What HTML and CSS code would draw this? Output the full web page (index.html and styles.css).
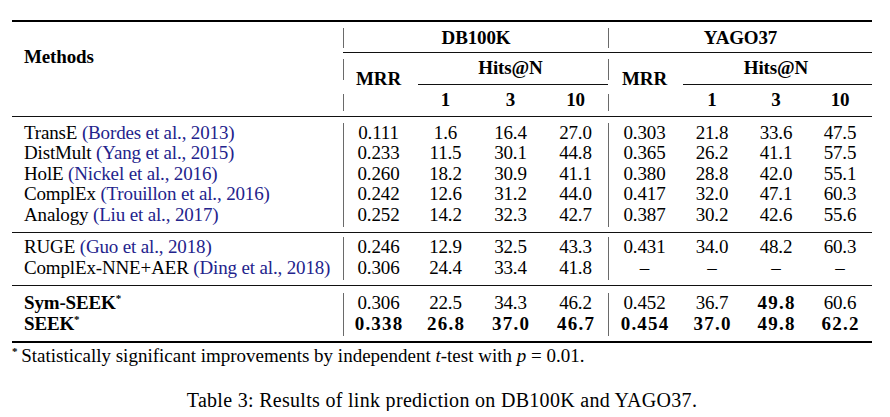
FILE: index.html
```html
<!DOCTYPE html>
<html>
<head>
<meta charset="utf-8">
<title>Table 3</title>
<link rel="stylesheet" href="styles.css">
</head>
<body>
<div class="page">
<table class="results">
<colgroup>
<col class="c-method"><col class="c-bar"><col class="c-mrr1"><col class="c-hit"><col class="c-hit"><col class="c-hit"><col class="c-bar"><col class="c-mrr2"><col class="c-hit2"><col class="c-hit2"><col class="c-hit2">
</colgroup>
<tbody>
<tr class="r-top"><td colspan="11"></td></tr>
<tr class="r-h1">
<th rowspan="5" class="methods">Methods</th>
<td class="v"></td><th colspan="4">DB100K</th><td class="v"></td><th colspan="4">YAGO37</th>
</tr>
<tr class="r-c1"><td colspan="10" class="cl"></td></tr>
<tr class="r-h2">
<td class="v"></td><th rowspan="3" class="mrr">MRR</th><th colspan="3">Hits@N</th>
<td class="v"></td><th rowspan="3" class="mrr">MRR</th><th colspan="3">Hits@N</th>
</tr>
<tr class="r-c2"><td></td><td colspan="3" class="cl cl-db"></td><td></td><td colspan="3" class="cl cl-yg"></td></tr>
<tr class="r-h3">
<td class="v"></td><th>1</th><th>3</th><th>10</th>
<td class="v"></td><th>1</th><th>3</th><th>10</th>
</tr>
<tr class="r-mid"><td colspan="11"></td></tr>

<tr class="row h20"><td class="m">TransE <span class="cite">(Bordes et al., 2013)</span></td><td class="v"></td><td>0.111</td><td>1.6</td><td>16.4</td><td>27.0</td><td class="v"></td><td>0.303</td><td>21.8</td><td>33.6</td><td>47.5</td></tr>
<tr class="row h21"><td class="m">DistMult <span class="cite">(Yang et al., 2015)</span></td><td class="v"></td><td>0.233</td><td>11.5</td><td>30.1</td><td>44.8</td><td class="v"></td><td>0.365</td><td>26.2</td><td>41.1</td><td>57.5</td></tr>
<tr class="row h20"><td class="m">HolE <span class="cite">(Nickel et al., 2016)</span></td><td class="v"></td><td>0.260</td><td>18.2</td><td>30.9</td><td>41.1</td><td class="v"></td><td>0.380</td><td>28.8</td><td>42.0</td><td>55.1</td></tr>
<tr class="row h21"><td class="m">ComplEx <span class="cite">(Trouillon et al., 2016)</span></td><td class="v"></td><td>0.242</td><td>12.6</td><td>31.2</td><td>44.0</td><td class="v"></td><td>0.417</td><td>32.0</td><td>47.1</td><td>60.3</td></tr>
<tr class="row h22"><td class="m">Analogy <span class="cite">(Liu et al., 2017)</span></td><td class="v"></td><td>0.252</td><td>14.2</td><td>32.3</td><td>42.7</td><td class="v"></td><td>0.387</td><td>30.2</td><td>42.6</td><td>55.6</td></tr>

<tr class="r-mid r-mid2"><td colspan="11"></td></tr>

<tr class="row h21"><td class="m">RUGE <span class="cite">(Guo et al., 2018)</span></td><td class="v"></td><td>0.246</td><td>12.9</td><td>32.5</td><td>43.3</td><td class="v"></td><td>0.431</td><td>34.0</td><td>48.2</td><td>60.3</td></tr>
<tr class="row h22"><td class="m">ComplEx-NNE+AER <span class="cite">(Ding et al., 2018)</span></td><td class="v"></td><td>0.306</td><td>24.4</td><td>33.4</td><td>41.8</td><td class="v"></td><td>&ndash;</td><td>&ndash;</td><td>&ndash;</td><td>&ndash;</td></tr>

<tr class="r-mid r-mid3"><td colspan="11"></td></tr>

<tr class="row h21"><td class="m b">Sym-SEEK<sup>*</sup></td><td class="v"></td><td>0.306</td><td>22.5</td><td>34.3</td><td>46.2</td><td class="v"></td><td>0.452</td><td>36.7</td><td><b>49.8</b></td><td>60.6</td></tr>
<tr class="row h22"><td class="m b">SEEK<sup>*</sup></td><td class="v"></td><td><b>0.338</b></td><td><b>26.8</b></td><td><b>37.0</b></td><td><b>46.7</b></td><td class="v"></td><td><b>0.454</b></td><td><b>37.0</b></td><td><b>49.8</b></td><td><b>62.2</b></td></tr>

<tr class="r-bottom"><td colspan="11"></td></tr>
</tbody>
</table>
<p class="footnote"><sup>*</sup> Statistically significant improvements by independent <i>t</i>-test with <i>p</i> = 0.01.</p>
<p class="caption">Table 3: Results of link prediction on DB100K and YAGO37.</p>
</div>
</body>
</html>
```

FILE: styles.css
```css
html, body {
  margin: 0;
  padding: 0;
  background: #fff;
}

.page {
  padding: 20px 0 0 12px;
  font-family: "Liberation Serif", "Times New Roman", serif;
  color: #000;
}

.results {
  border-collapse: collapse;
  border-spacing: 0;
  table-layout: fixed;
  width: 860px;
  font-size: 19px;
  letter-spacing: -0.15px;
}

.c-method { width: 331px; }
.c-bar { width: 1px; }
.c-mrr1 { width: 69px; }
.c-hit { width: 65px; }
.c-mrr2 { width: 71px; }
.c-hit2 { width: 64px; }

.results td,
.results th {
  padding: 0;
  text-align: center;
  vertical-align: top;
  white-space: nowrap;
  font-weight: normal;
  line-height: 19px;
}

.results th {
  font-weight: bold;
}

/* rules */
.r-top td,
.r-c1 td,
.r-c2 td,
.r-mid td,
.r-bottom td {
  font-size: 0;
  line-height: 0;
}

.r-top td {
  height: 8px;
  background: linear-gradient(#000, #000) no-repeat 0 0 / 100% 2px;
}

.r-c1 td { height: 10px; }
.r-c2 td { height: 10px; }

.cl {
  background: linear-gradient(#111, #111) no-repeat 0 4px / 100% 1px;
}
.cl-db {
  background-position: 5px 4px;
  background-size: calc(100% - 5px) 1px;
}
.cl-yg {
  background-position: 3px 4px;
  background-size: calc(100% - 3px) 1px;
}

.r-mid td {
  height: 12px;
  background: linear-gradient(#111, #111) no-repeat 0 5px / 100% 1px;
}
.r-mid2 td {
  height: 10px;
}
.r-mid3 td {
  height: 13px;
}

.r-bottom td {
  height: 7px;
  background: linear-gradient(#000, #000) no-repeat 0 5px / 100% 2px;
}

/* vertical bars */
.v {
  background: #6a6a6a;
}

/* header */
.r-h1 th,
.r-h1 td {
  height: 20px;
}

.results .methods {
  text-align: left;
  padding-left: 12px;
  padding-top: 19px;
}

.r-h2 th,
.r-h2 td {
  height: 22px;
}
.r-h2 .v {
  background: linear-gradient(#6a6a6a, #6a6a6a) no-repeat 0 1px / 1px 21px;
}

.results .mrr {
  padding-top: 11px;
}

.r-h3 th,
.r-h3 td {
  height: 21px;
}
.r-h3 .v {
  background: linear-gradient(#6a6a6a, #6a6a6a) no-repeat 0 4px / 1px 17px;
}

/* body rows */
.h20 td { height: 20px; }
.h21 td { height: 21px; }
.h22 td { height: 22px; }

.results td.m {
  text-align: left;
  padding-left: 12px;
}

.m.b {
  font-weight: bold;
}

.cite {
  color: #23238c;
}

.results b {
  font-weight: bold;
  letter-spacing: 1.2px;
  padding-left: 1.2px;
}

sup {
  font-size: 11px;
  line-height: 0;
  vertical-align: 7px;
}

.footnote {
  margin: 2px 0 0 0;
  font-size: 19px;
  line-height: 21px;
}

.footnote sup {
  font-weight: bold;
  margin-right: -1px;
}

.caption {
  margin: 23px 0 0 0;
  width: 860px;
  text-align: center;
  font-size: 20px;
  line-height: 22px;
  letter-spacing: 0.3px;
}
```
